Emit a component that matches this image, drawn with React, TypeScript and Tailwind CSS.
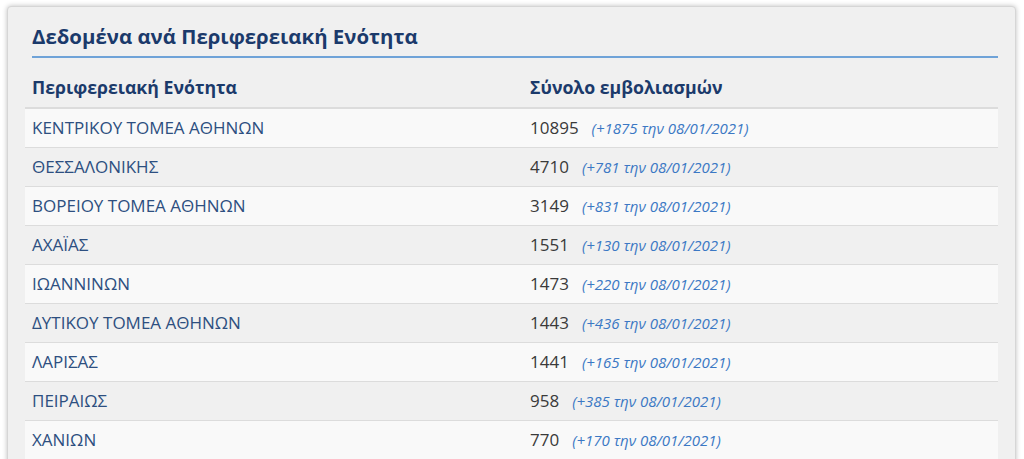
import React from 'react';

const rows = [
    { name: 'ΚΕΝΤΡΙΚΟΥ ΤΟΜΕΑ ΑΘΗΝΩΝ', total: '10895', diff: '+1875' },
    { name: 'ΘΕΣΣΑΛΟΝΙΚΗΣ', total: '4710', diff: '+781' },
    { name: 'ΒΟΡΕΙΟΥ ΤΟΜΕΑ ΑΘΗΝΩΝ', total: '3149', diff: '+831' },
    { name: 'ΑΧΑΪΑΣ', total: '1551', diff: '+130' },
    { name: 'ΙΩΑΝΝΙΝΩΝ', total: '1473', diff: '+220' },
    { name: 'ΔΥΤΙΚΟΥ ΤΟΜΕΑ ΑΘΗΝΩΝ', total: '1443', diff: '+436' },
    { name: 'ΛΑΡΙΣΑΣ', total: '1441', diff: '+165' },
    { name: 'ΠΕΙΡΑΙΩΣ', total: '958', diff: '+385' },
    { name: 'ΧΑΝΙΩΝ', total: '770', diff: '+170' },
];

const App = () => {
    return (
        <div className="h-[459px] overflow-hidden bg-white pt-[6px] pl-[7px] pr-[8px] font-['Open_Sans','Noto_Sans',sans-serif]">
            <div className="bg-[#f0f0f0] rounded-[4px] border border-[#d6d6d6] shadow-[0_0_5px_rgba(0,0,0,0.25)] px-[17px] pt-[15px] pb-6">
                {/* Title */}
                <div className="ml-[7px] border-b-2 border-[#6fa3d8] pb-[6px]">
                    <h2 className="text-[20.4px] leading-[28px] font-bold text-[#1b3a6b]">Δεδομένα ανά Περιφερειακή Ενότητα</h2>
                </div>

                {/* Table */}
                <table className="w-full mt-[9px] border-collapse">
                    <thead>
                        <tr className="border-b-2 border-[#dcdcdc]">
                            <th className="w-[498px] text-left px-[7px] py-[8px] text-[17.7px] leading-[24px] font-bold text-[#1b3a6b]">Περιφερειακή Ενότητα</th>
                            <th className="text-left px-[7px] py-[8px] text-[17.7px] leading-[24px] font-bold text-[#1b3a6b]">Σύνολο εμβολιασμών</th>
                        </tr>
                    </thead>
                    <tbody>
                        {rows.map((r, i) => (
                            <tr key={r.name} className={`border-b border-[#dcdcdc] ${i % 2 === 0 ? 'bg-[#f9f9f9]' : 'bg-[#f0f0f0]'}`}>
                                <td className="px-[7px] h-[39px] text-[17px] text-[#2d4f80]">{r.name}</td>
                                <td className="px-[7px] h-[39px] text-[17px] text-[#3a3a3a]">
                                    {r.total}
                                    <span className="ml-[13px] text-[15px] italic text-[#3b78c4]">({r.diff} την 08/01/2021)</span>
                                </td>
                            </tr>
                        ))}
                    </tbody>
                </table>
            </div>
        </div>
    );
};

export default App;
